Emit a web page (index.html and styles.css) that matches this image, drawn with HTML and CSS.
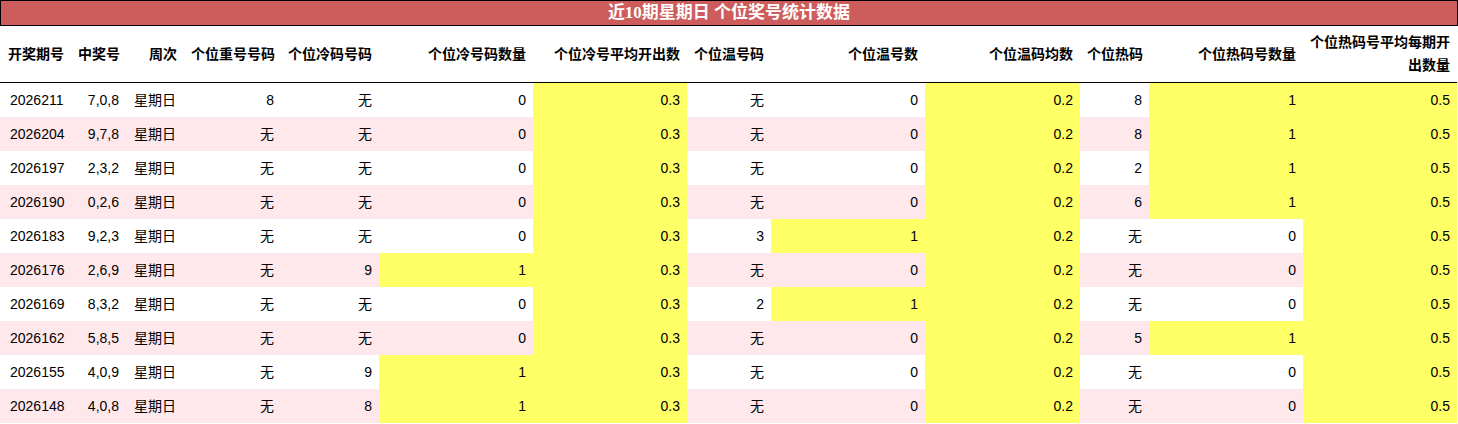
FILE: index.html
```html
<!DOCTYPE html>
<html lang="zh-CN">
<head>
<meta charset="utf-8">
<title>近10期星期日 个位奖号统计数据</title>
<link rel="stylesheet" href="styles.css">
</head>
<body>
<div class="wrap">
  <div class="title">近10期星期日 个位奖号统计数据</div>
  <table class="stats">
    <colgroup>
      <col class="w71"><col class="w55"><col class="w58"><col class="w97"><col class="w98">
      <col class="w154"><col class="w154"><col class="w84"><col class="w154"><col class="w155">
      <col class="w69"><col class="w154"><col class="w154">
    </colgroup>
    <thead>
      <tr>
        <th>开奖期号</th><th>中奖号</th><th>周次</th><th>个位重号号码</th><th>个位冷码号码</th>
        <th>个位冷号码数量</th><th>个位冷号平均开出数</th><th>个位温号码</th><th>个位温号数</th>
        <th>个位温码均数</th><th>个位热码</th><th>个位热码号数量</th><th class="wrapm">个位热码号平均每期开出数量</th>
      </tr>
    </thead>
    <tbody>
      <tr><td class="l">2026211</td><td>7,0,8</td><td class="l">星期日</td><td>8</td><td>无</td><td>0</td><td class="y">0.3</td><td>无</td><td>0</td><td class="y">0.2</td><td>8</td><td class="y">1</td><td class="y">0.5</td></tr>
      <tr class="alt"><td class="l">2026204</td><td>9,7,8</td><td class="l">星期日</td><td>无</td><td>无</td><td>0</td><td class="y">0.3</td><td>无</td><td>0</td><td class="y">0.2</td><td>8</td><td class="y">1</td><td class="y">0.5</td></tr>
      <tr><td class="l">2026197</td><td>2,3,2</td><td class="l">星期日</td><td>无</td><td>无</td><td>0</td><td class="y">0.3</td><td>无</td><td>0</td><td class="y">0.2</td><td>2</td><td class="y">1</td><td class="y">0.5</td></tr>
      <tr class="alt"><td class="l">2026190</td><td>0,2,6</td><td class="l">星期日</td><td>无</td><td>无</td><td>0</td><td class="y">0.3</td><td>无</td><td>0</td><td class="y">0.2</td><td>6</td><td class="y">1</td><td class="y">0.5</td></tr>
      <tr><td class="l">2026183</td><td>9,2,3</td><td class="l">星期日</td><td>无</td><td>无</td><td>0</td><td class="y">0.3</td><td>3</td><td class="y">1</td><td class="y">0.2</td><td>无</td><td>0</td><td class="y">0.5</td></tr>
      <tr class="alt"><td class="l">2026176</td><td>2,6,9</td><td class="l">星期日</td><td>无</td><td>9</td><td class="y">1</td><td class="y">0.3</td><td>无</td><td>0</td><td class="y">0.2</td><td>无</td><td>0</td><td class="y">0.5</td></tr>
      <tr><td class="l">2026169</td><td>8,3,2</td><td class="l">星期日</td><td>无</td><td>无</td><td>0</td><td class="y">0.3</td><td>2</td><td class="y">1</td><td class="y">0.2</td><td>无</td><td>0</td><td class="y">0.5</td></tr>
      <tr class="alt"><td class="l">2026162</td><td>5,8,5</td><td class="l">星期日</td><td>无</td><td>无</td><td>0</td><td class="y">0.3</td><td>无</td><td>0</td><td class="y">0.2</td><td>5</td><td class="y">1</td><td class="y">0.5</td></tr>
      <tr><td class="l">2026155</td><td>4,0,9</td><td class="l">星期日</td><td>无</td><td>9</td><td class="y">1</td><td class="y">0.3</td><td>无</td><td>0</td><td class="y">0.2</td><td>无</td><td>0</td><td class="y">0.5</td></tr>
      <tr class="alt"><td class="l">2026148</td><td>4,0,8</td><td class="l">星期日</td><td>无</td><td>8</td><td class="y">1</td><td class="y">0.3</td><td>无</td><td>0</td><td class="y">0.2</td><td>无</td><td>0</td><td class="y">0.5</td></tr>
    </tbody>
  </table>
</div>
</body>
</html>
```

FILE: styles.css
```css
html, body {
  margin: 0;
  padding: 0;
  background: #ffffff;
}

.wrap {
  width: 1458px;
}

.title {
  box-sizing: border-box;
  width: 1458px;
  height: 26px;
  border: 1px solid #000;
  background: #cd5c5c;
  color: #ffffff;
  font-family: "Liberation Serif", "Noto Sans CJK SC", serif;
  font-weight: bold;
  font-size: 17px;
  line-height: 24px;
  text-align: center;
}

.stats {
  width: 1457px;
  border-collapse: collapse;
  table-layout: fixed;
  font-family: "Liberation Sans", "Noto Sans CJK SC", sans-serif;
  font-size: 14px;
  color: #000;
}

.w55 { width: 55px; }
.w58 { width: 58px; }
.w69 { width: 69px; }
.w71 { width: 71px; }
.w84 { width: 84px; }
.w97 { width: 97px; }
.w98 { width: 98px; }
.w154 { width: 154px; }
.w155 { width: 155px; }

.stats th {
  height: 56px;
  padding: 0 7px 0 7px;
  text-align: right;
  font-weight: bold;
  color: #000;
  line-height: 23px;
  border-bottom: 1px solid #000;
  vertical-align: middle;
  white-space: nowrap;
  overflow: visible;
}

.stats th.wrapm {
  white-space: normal;
  padding-left: 4px;
}

.stats th:first-child {
  text-align: left;
  padding-left: 8px;
}

.stats td {
  height: 34px;
  padding: 0 7px 0 7px;
  text-align: right;
  vertical-align: middle;
  line-height: 20px;
  white-space: nowrap;
}

.stats td.l {
  text-align: left;
}

.stats td:first-child {
  padding-left: 10px;
}

.stats td:nth-child(3) {
  padding-left: 8px;
}

.stats tr.alt td {
  background: #ffe8eb;
}

.stats tr td.y,
.stats tr.alt td.y {
  background: #ffff66;
}
```
